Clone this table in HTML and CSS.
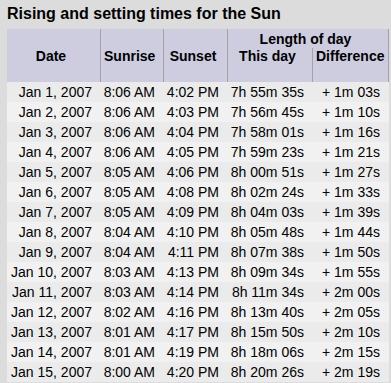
FILE: index.html
```html
<!DOCTYPE html>
<html>
<head>
<meta charset="utf-8">
<link rel="stylesheet" href="styles.css">
</head>
<body>
<h1 class="title">Rising and setting times for the Sun</h1>
<table class="sun">
<colgroup>
<col class="c1"><col class="c2"><col class="c3"><col class="c4"><col class="c5">
</colgroup>
<thead>
<tr>
<th rowspan="2" class="mid">Date</th>
<th rowspan="2" class="mid">Sunrise</th>
<th rowspan="2" class="mid">Sunset</th>
<th colspan="2" class="group">Length of day</th>
</tr>
<tr>
<th class="sub">This day</th>
<th class="sub">Difference</th>
</tr>
</thead>
<tbody>
<tr><td>Jan 1, 2007</td><td>8:06 AM</td><td>4:02 PM</td><td>7h 55m 35s</td><td>+ 1m 03s</td></tr>
<tr><td>Jan 2, 2007</td><td>8:06 AM</td><td>4:03 PM</td><td>7h 56m 45s</td><td>+ 1m 10s</td></tr>
<tr><td>Jan 3, 2007</td><td>8:06 AM</td><td>4:04 PM</td><td>7h 58m 01s</td><td>+ 1m 16s</td></tr>
<tr><td>Jan 4, 2007</td><td>8:06 AM</td><td>4:05 PM</td><td>7h 59m 23s</td><td>+ 1m 21s</td></tr>
<tr><td>Jan 5, 2007</td><td>8:05 AM</td><td>4:06 PM</td><td>8h 00m 51s</td><td>+ 1m 27s</td></tr>
<tr><td>Jan 6, 2007</td><td>8:05 AM</td><td>4:08 PM</td><td>8h 02m 24s</td><td>+ 1m 33s</td></tr>
<tr><td>Jan 7, 2007</td><td>8:05 AM</td><td>4:09 PM</td><td>8h 04m 03s</td><td>+ 1m 39s</td></tr>
<tr><td>Jan 8, 2007</td><td>8:04 AM</td><td>4:10 PM</td><td>8h 05m 48s</td><td>+ 1m 44s</td></tr>
<tr><td>Jan 9, 2007</td><td>8:04 AM</td><td>4:11 PM</td><td>8h 07m 38s</td><td>+ 1m 50s</td></tr>
<tr><td>Jan 10, 2007</td><td>8:03 AM</td><td>4:13 PM</td><td>8h 09m 34s</td><td>+ 1m 55s</td></tr>
<tr><td>Jan 11, 2007</td><td>8:03 AM</td><td>4:14 PM</td><td>8h 11m 34s</td><td>+ 2m 00s</td></tr>
<tr><td>Jan 12, 2007</td><td>8:02 AM</td><td>4:16 PM</td><td>8h 13m 40s</td><td>+ 2m 05s</td></tr>
<tr><td>Jan 13, 2007</td><td>8:01 AM</td><td>4:17 PM</td><td>8h 15m 50s</td><td>+ 2m 10s</td></tr>
<tr><td>Jan 14, 2007</td><td>8:01 AM</td><td>4:19 PM</td><td>8h 18m 06s</td><td>+ 2m 15s</td></tr>
<tr><td>Jan 15, 2007</td><td>8:00 AM</td><td>4:20 PM</td><td>8h 20m 26s</td><td>+ 2m 19s</td></tr>
</tbody>
</table>
</body>
</html>
```
FILE: styles.css
```css
html, body {
  margin: 0;
  background: #dcdcdc;
}
body {
  padding: 5px 0 0 7px;
  font-family: "Liberation Sans", Arial, sans-serif;
  color: #000;
}
.title {
  margin: 0 0 6px 0;
  font-size: 16px;
  line-height: 18px;
  font-weight: bold;
}
.sun {
  border-collapse: separate;
  border-spacing: 0;
  table-layout: fixed;
  width: 382px;
  font-size: 14px;
}
.c1 { width: 94px; }
.c2 { width: 63px; }
.c3 { width: 64px; }
.c4 { width: 85px; }
.c5 { width: 76px; }
.sun th {
  background: #cdcddf;
  font-weight: bold;
  text-align: center;
  border-right: 1px solid #a2a2a8;
  padding: 0 8px 0 3px;
  line-height: 17px;
  white-space: nowrap;
}
.sun th.mid {
  height: 52px;
  vertical-align: middle;
  padding-top: 1px;
}
.sun th.group {
  height: 18px;
  vertical-align: middle;
  padding-top: 1px;
  border-right: 1px solid #a2a2a8;
}
.sun th.sub {
  vertical-align: top;
  padding-top: 0;
  height: 33px;
}
.sun td {
  text-align: right;
  padding: 0 9px 0 0;
  height: 20px;
  line-height: 20px;
  white-space: nowrap;
}
.sun tbody tr:nth-child(odd) td { background: #ebebeb; }
.sun tbody tr:nth-child(even) td { background: #f1f1f1; }
```
